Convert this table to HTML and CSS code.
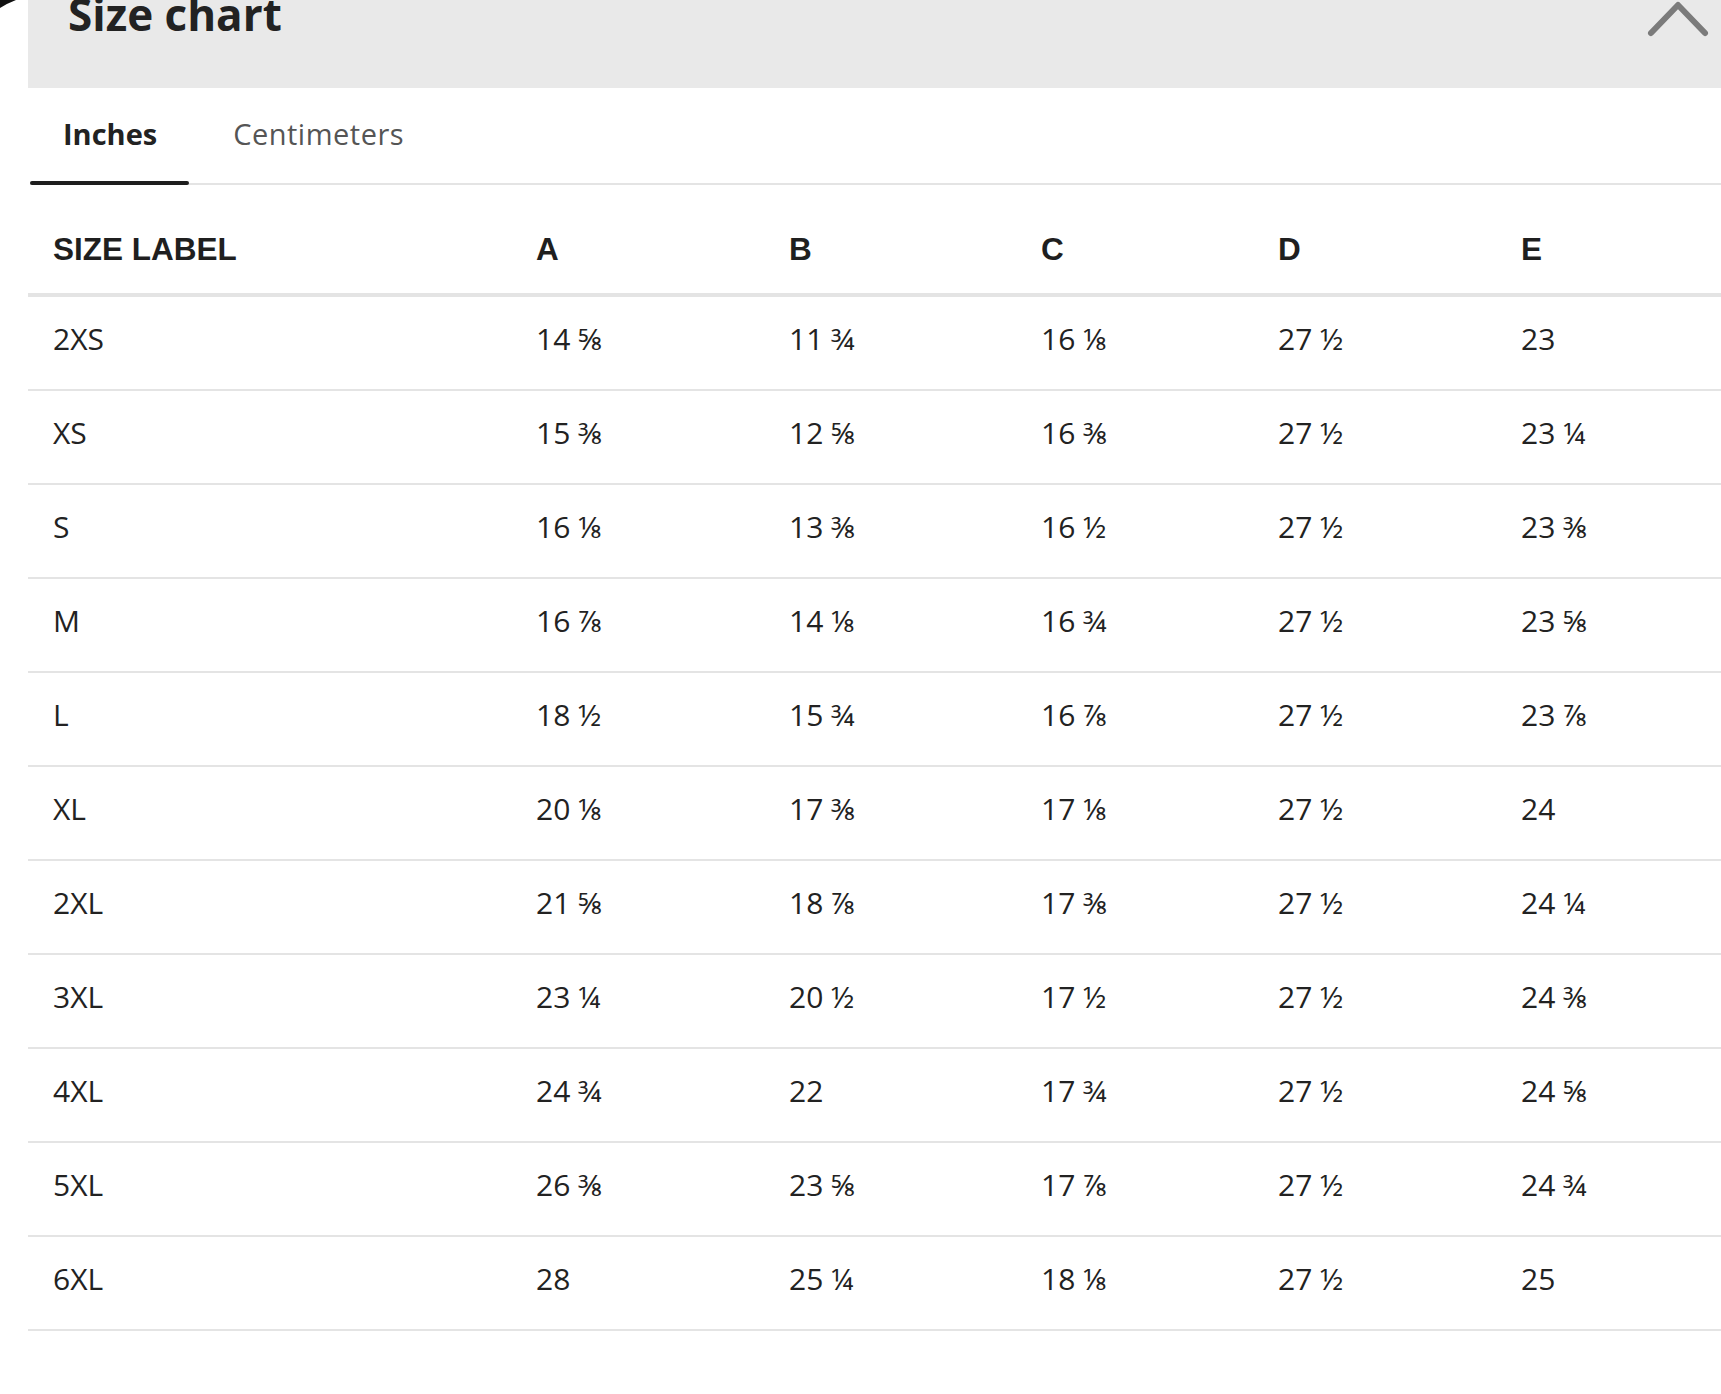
FILE: index.html
```html
<!DOCTYPE html>
<html lang="en">
<head>
<meta charset="utf-8">
<title>Size chart</title>
<link rel="stylesheet" href="styles.css">
</head>
<body>
<svg class="corner" width="16" height="9" viewBox="0 0 16 9" aria-hidden="true"><path d="M0 0 L16 0 Q8 3 0 8 Z" fill="#111"/></svg>
<div class="panel">
  <header class="panel-head">
    <h2 class="title">Size chart</h2>
    <svg class="chevron" width="66" height="40" viewBox="0 0 66 40" aria-hidden="true"><path d="M6 34 L33 6 L60 34" fill="none" stroke="#7b7b7b" stroke-width="6" stroke-linecap="round" stroke-linejoin="round"/></svg>
  </header>
  <nav class="tabs">
    <span class="tab active">Inches</span>
    <span class="tab">Centimeters</span>
  </nav>
  <table class="chart">
    <colgroup>
      <col class="c1"><col class="c2"><col class="c3"><col class="c4"><col class="c5"><col class="c6">
    </colgroup>
    <thead>
      <tr><th>SIZE LABEL</th><th>A</th><th>B</th><th>C</th><th>D</th><th>E</th></tr>
    </thead>
    <tbody>
      <tr><td>2XS</td><td>14 ⅝</td><td>11 ¾</td><td>16 ⅛</td><td>27 ½</td><td>23</td></tr>
      <tr><td>XS</td><td>15 ⅜</td><td>12 ⅝</td><td>16 ⅜</td><td>27 ½</td><td>23 ¼</td></tr>
      <tr><td>S</td><td>16 ⅛</td><td>13 ⅜</td><td>16 ½</td><td>27 ½</td><td>23 ⅜</td></tr>
      <tr><td>M</td><td>16 ⅞</td><td>14 ⅛</td><td>16 ¾</td><td>27 ½</td><td>23 ⅝</td></tr>
      <tr><td>L</td><td>18 ½</td><td>15 ¾</td><td>16 ⅞</td><td>27 ½</td><td>23 ⅞</td></tr>
      <tr><td>XL</td><td>20 ⅛</td><td>17 ⅜</td><td>17 ⅛</td><td>27 ½</td><td>24</td></tr>
      <tr><td>2XL</td><td>21 ⅝</td><td>18 ⅞</td><td>17 ⅜</td><td>27 ½</td><td>24 ¼</td></tr>
      <tr><td>3XL</td><td>23 ¼</td><td>20 ½</td><td>17 ½</td><td>27 ½</td><td>24 ⅜</td></tr>
      <tr><td>4XL</td><td>24 ¾</td><td>22</td><td>17 ¾</td><td>27 ½</td><td>24 ⅝</td></tr>
      <tr><td>5XL</td><td>26 ⅜</td><td>23 ⅝</td><td>17 ⅞</td><td>27 ½</td><td>24 ¾</td></tr>
      <tr><td>6XL</td><td>28</td><td>25 ¼</td><td>18 ⅛</td><td>27 ½</td><td>25</td></tr>
    </tbody>
  </table>
</div>
</body>
</html>
```
FILE: styles.css
```css
html, body {
  margin: 0;
  padding: 0;
  background: #ffffff;
}
body {
  position: relative;
  overflow: hidden;
  font-family: "Open Sans", "DejaVu Sans", sans-serif;
  color: #222222;
}
.corner {
  position: absolute;
  left: 0;
  top: 0;
}
.panel {
  margin-left: 28px;
}
.panel-head {
  height: 88px;
  background: #e9e9e9;
  display: flex;
  justify-content: space-between;
  align-items: flex-start;
  overflow: hidden;
}
.title {
  margin: -8px 0 0 40px;
  font-size: 44px;
  line-height: 44px;
  font-weight: 700;
  color: #222222;
}
.chevron {
  display: block;
  margin: -1px 10px 0 0;
}
.tabs {
  display: flex;
  gap: 11px;
  margin-left: 2px;
  border-bottom: 2px solid #e4e4e4;
}
.tab {
  position: relative;
  padding: 26px 32px 27px 33px;
  margin-bottom: -2px;
  border-bottom: 4px solid transparent;
  font-size: 29px;
  line-height: 40px;
  letter-spacing: 0.5px;
  color: #555555;
}
.tab.active {
  font-weight: 700;
  letter-spacing: 0;
  color: #222222;
}
.tab.active::after {
  content: "";
  position: absolute;
  left: 0;
  right: 0;
  bottom: -4px;
  height: 4px;
  border-radius: 2px;
  background: #1e1e1e;
}
.chart {
  width: 1693px;
  border-collapse: collapse;
  table-layout: fixed;
}
.c1 { width: 483px; }
.c2 { width: 253px; }
.c3 { width: 252px; }
.c4 { width: 237px; }
.c5 { width: 243px; }
.c6 { width: 225px; }
.chart th {
  text-align: left;
  padding: 46px 0 26px 25px;
  font-family: "Liberation Sans", Arial, sans-serif;
  font-size: 31.5px;
  line-height: 36px;
  font-weight: 700;
  color: #1f1f1f;
  border-bottom: 4px solid #e4e4e4;
}
.chart td {
  padding: 22px 0 30px 25px;
  font-size: 30px;
  line-height: 40px;
  color: #222222;
  border-bottom: 2px solid #e4e4e4;
  white-space: nowrap;
}
```
